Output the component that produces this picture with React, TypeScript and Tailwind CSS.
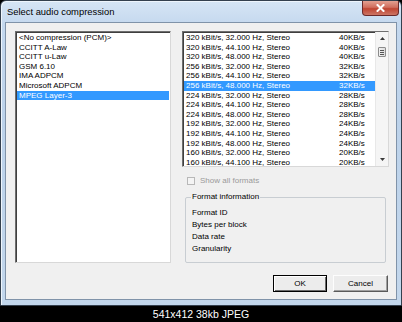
import React from "react";

const leftItems = [
  "<No compression (PCM)>",
  "CCITT A-Law",
  "CCITT u-Law",
  "GSM 6.10",
  "IMA ADPCM",
  "Microsoft ADPCM",
  "MPEG Layer-3",
];

const rows: [string, string][] = [
  ["320 kBit/s, 32.000 Hz, Stereo", "40KB/s"],
  ["320 kBit/s, 44.100 Hz, Stereo", "40KB/s"],
  ["320 kBit/s, 48.000 Hz, Stereo", "40KB/s"],
  ["256 kBit/s, 32.000 Hz, Stereo", "32KB/s"],
  ["256 kBit/s, 44.100 Hz, Stereo", "32KB/s"],
  ["256 kBit/s, 48.000 Hz, Stereo", "32KB/s"],
  ["224 kBit/s, 32.000 Hz, Stereo", "28KB/s"],
  ["224 kBit/s, 44.100 Hz, Stereo", "28KB/s"],
  ["224 kBit/s, 48.000 Hz, Stereo", "28KB/s"],
  ["192 kBit/s, 32.000 Hz, Stereo", "24KB/s"],
  ["192 kBit/s, 44.100 Hz, Stereo", "24KB/s"],
  ["192 kBit/s, 48.000 Hz, Stereo", "24KB/s"],
  ["160 kBit/s, 32.000 Hz, Stereo", "20KB/s"],
  ["160 kBit/s, 44.100 Hz, Stereo", "20KB/s"],
];

const ui = { fontFamily: '"Liberation Sans", Arial, sans-serif' };

export default function App() {
  return (
    <div className="w-[402px] h-[322px] bg-black flex flex-col overflow-hidden">
      {/* Window */}
      <div className="h-[306px] w-[402px] flex flex-col border border-[#34404e] rounded-t-[6px] bg-[linear-gradient(180deg,#d6e5f5_0%,#c4d8ee_8%,#bcd2ea_40%,#c3d7ec_100%)] shadow-[inset_1px_1px_0_#eef5fc]">
        {/* Title bar */}
        <div className="h-[21px] flex items-center justify-between pl-[6px] pr-[2px]">
          <span className="text-[9.4px] text-black leading-none mt-[1px]" style={ui}>
            Select audio compression
          </span>
          <div className="self-start w-[37px] h-[15px] rounded-b-[4px] border border-[#6b2a2a] border-t-0 bg-[linear-gradient(180deg,#e3a091_0%,#d06e5e_45%,#bf4532_55%,#cc7565_100%)] flex items-center justify-center">
            <svg width="9" height="8" viewBox="0 0 9 8">
              <path d="M1.5 1 L7.5 7 M7.5 1 L1.5 7" stroke="#ffffff" strokeWidth="2" strokeLinecap="square" />
            </svg>
          </div>
        </div>
        {/* Client area */}
        <div className="mx-[4px] h-[278px] border border-[#8093a9] bg-[#f0f0f0] flex flex-col pl-[9px] pt-[8px] pr-[7px]" style={ui}>
          <div className="flex h-[232px] gap-[11px]">
            {/* Left list */}
            <div className="w-[156px] h-[232px] bg-white border border-t-[#6e6e6e] border-l-[#6e6e6e] border-r-[#d8d8d8] border-b-[#d8d8d8] shadow-[inset_1px_1px_0_#3f3f3f] pt-[1px] pl-[1px] pr-[1px]">
              {leftItems.map((t, i) => (
                <div
                  key={t}
                  className={
                    "h-[9.6px] leading-[9.6px] text-[8px] pl-[2px] whitespace-nowrap " +
                    (i === 6 ? "bg-[#3399ff] text-white" : "text-black")
                  }
                >
                  {t}
                </div>
              ))}
            </div>
            {/* Right column */}
            <div className="w-[207px] flex flex-col">
              <div className="h-[136px] bg-white border border-t-[#6e6e6e] border-l-[#6e6e6e] border-r-[#d8d8d8] border-b-[#d8d8d8] shadow-[inset_1px_1px_0_#3f3f3f] flex">
                <div className="flex-1 overflow-hidden pl-[1px] pt-[1px]">
                  {rows.map(([a, b], i) => (
                    <div
                      key={i}
                      className={
                        "h-[9.6px] leading-[9.6px] text-[8px] pl-[2px] flex whitespace-nowrap " +
                        (i === 5 ? "bg-[#3399ff] text-white" : "text-black")
                      }
                    >
                      <span className="w-[153px]">{a}</span>
                      <span>{b}</span>
                    </div>
                  ))}
                </div>
                {/* Scrollbar */}
                <div className="w-[13px] bg-[#f5f5f5] border-l border-[#e8e8e8] flex flex-col items-center">
                  <div className="h-[13px] w-full flex items-center justify-center">
                    <svg width="5" height="3" viewBox="0 0 5 3">
                      <path d="M0 3 L2.5 0 L5 3 Z" fill="#3a3a3a" />
                    </svg>
                  </div>
                  <div className="w-[8px] h-[10px] mt-[2px] border border-[#8c8c8c] rounded-[1px] bg-[linear-gradient(90deg,#f2f2f2,#dcdcdc)] flex flex-col items-center justify-center gap-[1px]">
                    <div className="w-[4px] h-px bg-[#555]" />
                    <div className="w-[4px] h-px bg-[#555]" />
                    <div className="w-[4px] h-px bg-[#555]" />
                  </div>
                  <div className="flex-1" />
                  <div className="h-[13px] w-full flex items-center justify-center">
                    <svg width="5" height="3" viewBox="0 0 5 3">
                      <path d="M0 0 L5 0 L2.5 3 Z" fill="#3a3a3a" />
                    </svg>
                  </div>
                </div>
              </div>
              {/* Checkbox */}
              <div className="mt-[10px] h-[8px] flex items-center pl-[5px]">
                <div className="w-[8px] h-[8px] border border-[#b8b8b8] bg-[#f4f4f4]" />
                <span className="ml-[5px] text-[8px] leading-none text-[#9a9a9a]">Show all formats</span>
              </div>
              {/* Group box */}
              <div className="mt-[12px] mx-[3px] h-[66px] border border-[#c8cdd2] rounded-[2px] relative pl-[6px] pt-[9px]">
                <span className="absolute -top-[6px] left-[5px] px-[1px] bg-[#f0f0f0] text-[8px] leading-[10px] text-black">
                  Format information
                </span>
                {["Format ID", "Bytes per block", "Data rate", "Granularity"].map((t) => (
                  <div key={t} className="h-[12px] leading-[12px] text-[8px] text-black">
                    {t}
                  </div>
                ))}
              </div>
            </div>
          </div>
          {/* Buttons */}
          <div className="mt-[12px] h-[17px] flex justify-end gap-[6px] pr-[1px]">
            <div className="w-[54px] h-[17px] border border-black bg-[#ececec] flex items-center justify-center shadow-[inset_1px_1px_0_#ffffff,inset_-1px_-1px_0_#6a6a6a]">
              <span className="text-[8px] leading-none text-black">OK</span>
            </div>
            <div className="w-[55px] h-[17px] border border-t-[#fdfdfd] border-l-[#fdfdfd] border-r-[#5a5a5a] border-b-[#5a5a5a] bg-[#ececec] flex items-center justify-center shadow-[inset_-1px_-1px_0_#a0a0a0]">
              <span className="text-[8px] leading-none text-black">Cancel</span>
            </div>
          </div>
        </div>
      </div>
      {/* Caption */}
      <div className="flex-1 flex items-center justify-center">
        <span className="text-[10.5px] text-white leading-none" style={ui}>
          541x412 38kb JPEG
        </span>
      </div>
    </div>
  );
}
